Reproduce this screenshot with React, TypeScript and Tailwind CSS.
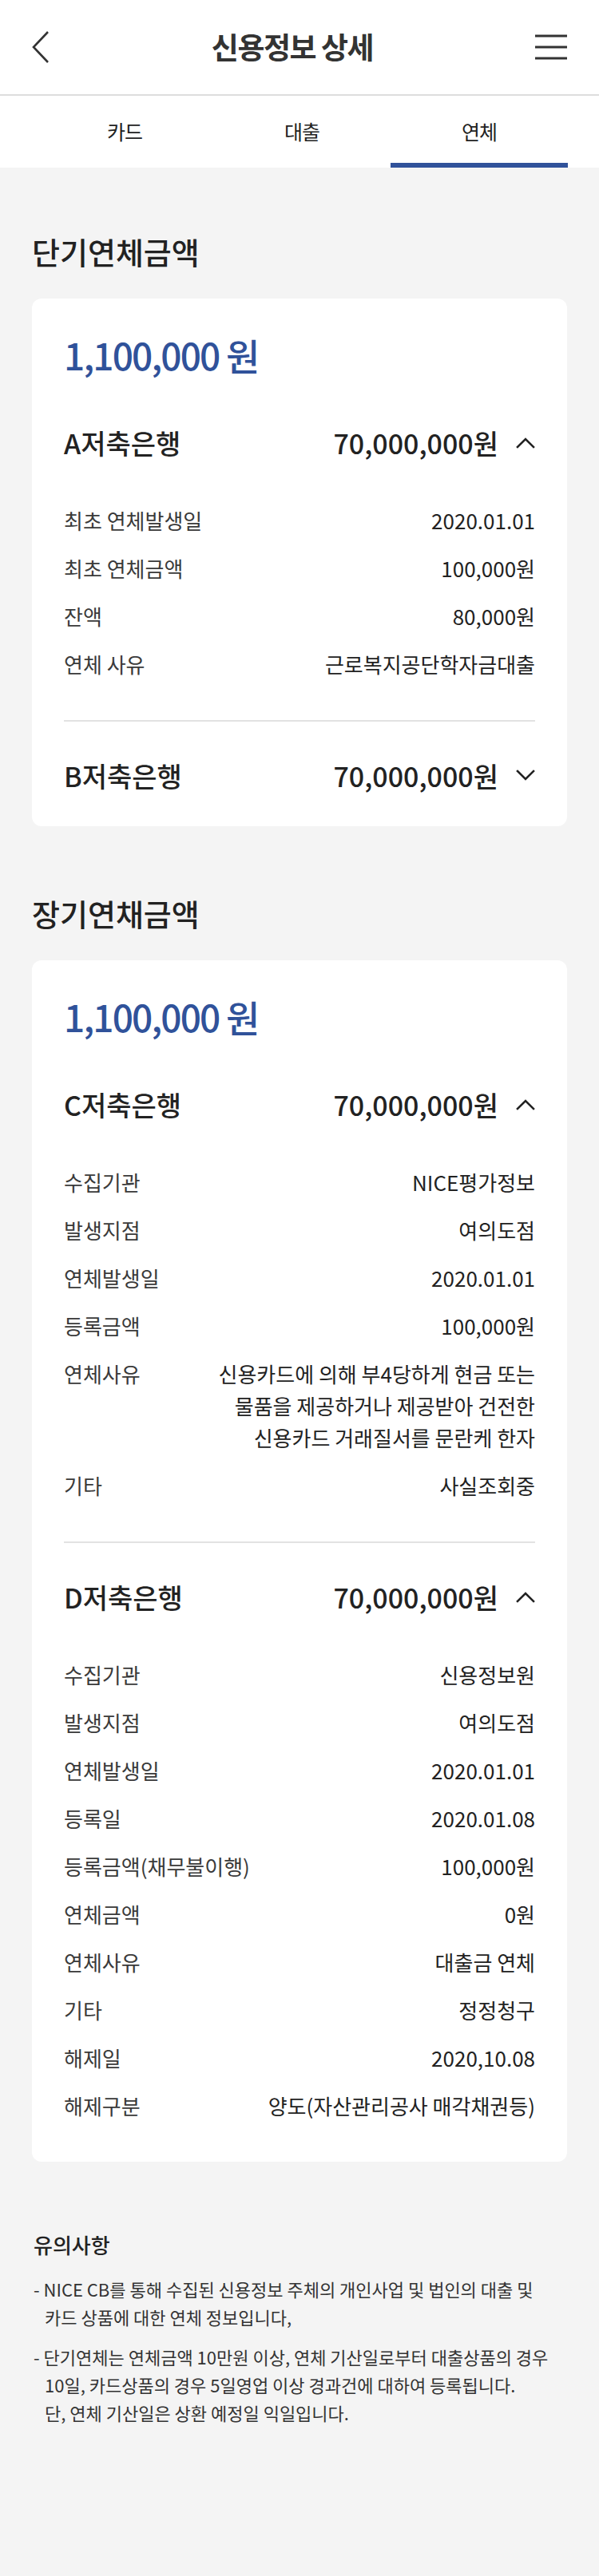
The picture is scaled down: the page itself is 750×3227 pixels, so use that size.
import React from "react";

type Row = { label: string; value: string[] };

const short: Row[] = [
  { label: "최초 연체발생일", value: ["2020.01.01"] },
  { label: "최초 연체금액", value: ["100,000원"] },
  { label: "잔액", value: ["80,000원"] },
  { label: "연체 사유", value: ["근로복지공단학자금대출"] },
];

const rowsC: Row[] = [
  { label: "수집기관", value: ["NICE평가정보"] },
  { label: "발생지점", value: ["여의도점"] },
  { label: "연체발생일", value: ["2020.01.01"] },
  { label: "등록금액", value: ["100,000원"] },
  {
    label: "연체사유",
    value: [
      "신용카드에 의해 부4당하게 현금 또는",
      "물품을 제공하거나 제공받아 건전한",
      "신용카드 거래질서를 문란케 한자",
    ],
  },
  { label: "기타", value: ["사실조회중"] },
];

const rowsD: Row[] = [
  { label: "수집기관", value: ["신용정보원"] },
  { label: "발생지점", value: ["여의도점"] },
  { label: "연체발생일", value: ["2020.01.01"] },
  { label: "등록일", value: ["2020.01.08"] },
  { label: "등록금액(채무불이행)", value: ["100,000원"] },
  { label: "연체금액", value: ["0원"] },
  { label: "연체사유", value: ["대출금 연체"] },
  { label: "기타", value: ["정정청구"] },
  { label: "해제일", value: ["2020,10.08"] },
  { label: "해제구분", value: ["양도(자산관리공사 매각채권등)"] },
];

function Chevron({ up }: { up: boolean }) {
  return (
    <svg width="24" height="15" viewBox="0 0 24 15" fill="none" stroke="#222" strokeWidth={2.6} strokeLinecap="square">
      {up ? <polyline points="2,13 12,3 22,13" /> : <polyline points="2,2 12,12 22,2" />}
    </svg>
  );
}

function Bank({ name, amount, rows, first }: { name: string; amount: string; rows?: Row[]; first?: boolean }) {
  const open = !!rows;
  return (
    <div className={`${first ? "" : "border-t-2 border-[#e2e2e2] pt-[37px]"} ${open ? "pb-[40px]" : "pb-[34px]"}`}>
      <div className="flex h-[60px] items-center justify-between text-[34px] font-medium text-[#222]">
        <span>{name}</span>
        <div className="flex items-center gap-[22px]">
          <span>{amount}</span>
          <Chevron up={open} />
        </div>
      </div>
      {open && (
        <div className="mt-[38px]">
          {rows!.map((r) => (
            <div key={r.label} className="flex items-start justify-between py-[10px] text-[26px] leading-[40px]">
              <span className="text-[#3a3a3a]">{r.label}</span>
              <div className="text-right text-[#222]">
                {r.value.map((v) => (
                  <div key={v}>{v}</div>
                ))}
              </div>
            </div>
          ))}
        </div>
      )}
    </div>
  );
}

function Card({ children }: { children: React.ReactNode }) {
  return (
    <div className="mx-[40px] rounded-[12px] bg-white px-[40px] pt-[40px]">
      <div className="h-[60px] text-[46px] font-medium leading-[60px] tracking-[-0.04em] text-[#30529a]">1,100,000 원</div>
      <div className="mt-[50px]">{children}</div>
    </div>
  );
}

export default function App() {
  return (
    <div className="min-h-screen bg-[#f4f4f4] font-['Noto_Sans_CJK_KR','Noto_Sans',sans-serif] text-[#222]">
      <header className="flex h-[120px] items-center justify-between border-b-2 border-[#dddddd] bg-white px-[40px]">
        <svg width="22" height="40" viewBox="0 0 22 40" fill="none" stroke="#333" strokeWidth={2.6}>
          <polyline points="20,1 2,20 20,39" />
        </svg>
        <h1 className="text-[37px] font-bold tracking-[-0.04em] text-[#333]">신용정보 상세</h1>
        <svg width="40" height="32" viewBox="0 0 40 32" fill="none" stroke="#333" strokeWidth={3}>
          <line x1="0" y1="2" x2="40" y2="2" />
          <line x1="0" y1="16" x2="40" y2="16" />
          <line x1="0" y1="30" x2="40" y2="30" />
        </svg>
      </header>

      <nav className="grid h-[90px] grid-cols-3 bg-white pl-[45px] pr-[39px] text-[25px] tracking-[-0.04em] text-[#222]">
        <div className="flex items-center justify-center">카드</div>
        <div className="flex items-center justify-center">대출</div>
        <div className="relative flex items-center justify-center">
          연체
          <div className="absolute bottom-0 left-0 right-0 h-[6px] bg-[#30529a]" />
        </div>
      </nav>

      <h2 className="px-[40px] pt-[80px] pb-[34px] text-[38px] font-medium leading-[50px] text-[#222]">단기연체금액</h2>
      <Card>
        <Bank name="A저축은행" amount="70,000,000원" rows={short} first />
        <Bank name="B저축은행" amount="70,000,000원" />
      </Card>

      <h2 className="px-[40px] pt-[84px] pb-[34px] text-[38px] font-medium leading-[50px] text-[#222]">장기연채금액</h2>
      <Card>
        <Bank name="C저축은행" amount="70,000,000원" rows={rowsC} first />
        <Bank name="D저축은행" amount="70,000,000원" rows={rowsD} />
      </Card>

      <section className="px-[42px] pt-[86px] pb-[187px]">
        <h3 className="text-[26px] font-medium leading-[36px] text-[#222]">유의사항</h3>
        <div className="mt-[20px] flex flex-col gap-[15px] text-[22px] leading-[35px] text-[#333]">
          <p className="pl-[14px] -indent-[14px]">
            - NICE CB를 통해 수집된 신용정보 주체의 개인사업 및 법인의 대출 및
            <br />
            카드 상품에 대한 연체 정보입니다,
          </p>
          <p className="pl-[14px] -indent-[14px]">
            - 단기연체는 연체금액 10만원 이상, 연체 기산일로부터 대출상품의 경우
            <br />
            10일, 카드상품의 경우 5일영업 이상 경과건에 대하여 등록됩니다.
            <br />
            단, 연체 기산일은 상환 예정일 익일입니다.
          </p>
        </div>
      </section>
    </div>
  );
}
